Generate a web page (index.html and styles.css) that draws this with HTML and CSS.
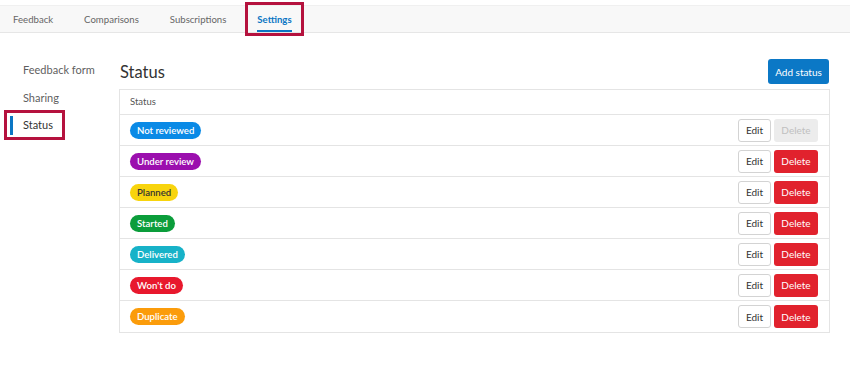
FILE: index.html
```html
<!DOCTYPE html>
<html>
<head>
<meta charset="utf-8">
<link rel="stylesheet" href="styles.css">
</head>
<body>
<nav class="tabbar">
  <a class="tab">Feedback</a>
  <a class="tab">Comparisons</a>
  <a class="tab">Subscriptions</a>
  <a class="tab tab-active callout">Settings</a>
</nav>
<div class="page">
  <aside class="sidenav">
    <a class="side-item">Feedback form</a>
    <a class="side-item">Sharing</a>
    <a class="side-item side-active callout">Status</a>
  </aside>
  <main class="content">
    <div class="content-head">
      <h1 class="title">Status</h1>
      <button class="btn btn-primary">Add status</button>
    </div>
    <div class="table">
      <div class="table-head">Status</div>
      <div class="row"><span class="pill pill-blue">Not reviewed</span><div class="actions"><button class="btn btn-edit">Edit</button><button class="btn btn-delete is-disabled">Delete</button></div></div>
      <div class="row"><span class="pill pill-purple">Under review</span><div class="actions"><button class="btn btn-edit">Edit</button><button class="btn btn-delete">Delete</button></div></div>
      <div class="row"><span class="pill pill-yellow">Planned</span><div class="actions"><button class="btn btn-edit">Edit</button><button class="btn btn-delete">Delete</button></div></div>
      <div class="row"><span class="pill pill-green">Started</span><div class="actions"><button class="btn btn-edit">Edit</button><button class="btn btn-delete">Delete</button></div></div>
      <div class="row"><span class="pill pill-teal">Delivered</span><div class="actions"><button class="btn btn-edit">Edit</button><button class="btn btn-delete">Delete</button></div></div>
      <div class="row"><span class="pill pill-red">Won't do</span><div class="actions"><button class="btn btn-edit">Edit</button><button class="btn btn-delete">Delete</button></div></div>
      <div class="row"><span class="pill pill-orange">Duplicate</span><div class="actions"><button class="btn btn-edit">Edit</button><button class="btn btn-delete">Delete</button></div></div>
    </div>
  </main>
</div>
</body>
</html>
```

FILE: styles.css
```css
*, *::before, *::after { box-sizing: border-box; }
html, body { margin: 0; padding: 0; background: #fff; }
body {
  font-family: Lato, "Open Sans", "Liberation Sans", sans-serif;
  color: #333;
  width: 850px;
  height: 388px;
  overflow: hidden;
}

.tabbar {
  margin-top: 5px;
  height: 28px;
  background: #f8f8f8;
  border-top: 1px solid #f0f0f0;
  border-bottom: 1px solid #e6e6e6;
  display: flex;
  align-items: stretch;
  padding-left: 13px;
  gap: 31px;
}
.tab {
  position: relative;
  display: flex;
  align-items: center;
  font-size: 9.6px;
  color: #666;
  padding-top: 0;
}
.tab-active {
  color: #0b76c4;
  font-weight: 700;
}
.tab-active::before {
  content: "";
  position: absolute;
  left: 0;
  right: 0;
  bottom: 0;
  height: 2px;
  background: #0b76c4;
}
.tab.callout::after {
  content: "";
  position: absolute;
  left: -12px;
  right: -12px;
  top: -4px;
  bottom: -4px;
  border: 3px solid #b5123e;
}

.page {
  display: flex;
  padding-top: 24px;
}
.sidenav {
  width: 119px;
  display: flex;
  flex-direction: column;
  padding-top: 2px;
}
.side-item {
  position: relative;
  font-size: 11px;
  color: #5f5f5f;
  padding-left: 23px;
  height: 27.5px;
  line-height: 22px;
}
.side-active {
  color: #333;
}
.side-active::before {
  content: "";
  position: absolute;
  left: 10px;
  top: 2px;
  width: 3px;
  height: 19px;
  background: #0b76c4;
}
.side-item.callout::after {
  content: "";
  position: absolute;
  left: 4px;
  width: 61px;
  top: -4px;
  height: 30px;
  border: 3px solid #b5123e;
}

.content {
  width: 711px;
}
.content-head {
  display: flex;
  justify-content: space-between;
  align-items: flex-start;
  height: 32px;
}
.title {
  margin: 0;
  font-weight: 400;
  font-size: 16.5px;
  color: #333;
  line-height: 22px;
  padding-top: 4px;
  padding-left: 1px;
}
.btn {
  font-family: inherit;
  border: 1px solid transparent;
  border-radius: 3px;
  cursor: pointer;
  padding: 0;
}
.btn-primary {
  background: #0b78c6;
  color: #fff;
  font-size: 10px;
  width: 61px;
  height: 25px;
  margin-top: 2px;
  margin-right: 1px;
}

.table {
  border: 1px solid #e4e4e4;
}
.table-head {
  height: 25px;
  line-height: 24px;
  font-size: 9.5px;
  color: #555;
  padding-left: 10px;
  border-bottom: 1px solid #e4e4e4;
}
.row {
  height: 31px;
  display: flex;
  align-items: center;
  justify-content: space-between;
  padding: 0 11px 0 10px;
  border-bottom: 1px solid #e4e4e4;
}
.row:last-child { border-bottom: none; }

.pill {
  display: inline-block;
  height: 17px;
  line-height: 17px;
  border-radius: 9px;
  padding: 0 7px;
  font-size: 9.6px;
  font-weight: 600;
  color: #fff;
}
.pill-blue { background: #0a8ae6; }
.pill-purple { background: #9b0fae; }
.pill-yellow { background: #f8d40d; color: #333; }
.pill-green { background: #0b9d3b; }
.pill-teal { background: #17b2c8; }
.pill-red { background: #e8182d; }
.pill-orange { background: #fb9c0b; }

.actions {
  display: flex;
  gap: 3px;
}
.btn-edit {
  width: 33px;
  height: 23px;
  background: #fff;
  border-color: #d3d3d3;
  color: #333;
  font-size: 10px;
}
.btn-delete {
  width: 44px;
  height: 23px;
  background: #e1222d;
  color: #fff;
  font-size: 10px;
}
.btn-delete.is-disabled {
  background: #ececec;
  color: #c0c0c0;
}
```
